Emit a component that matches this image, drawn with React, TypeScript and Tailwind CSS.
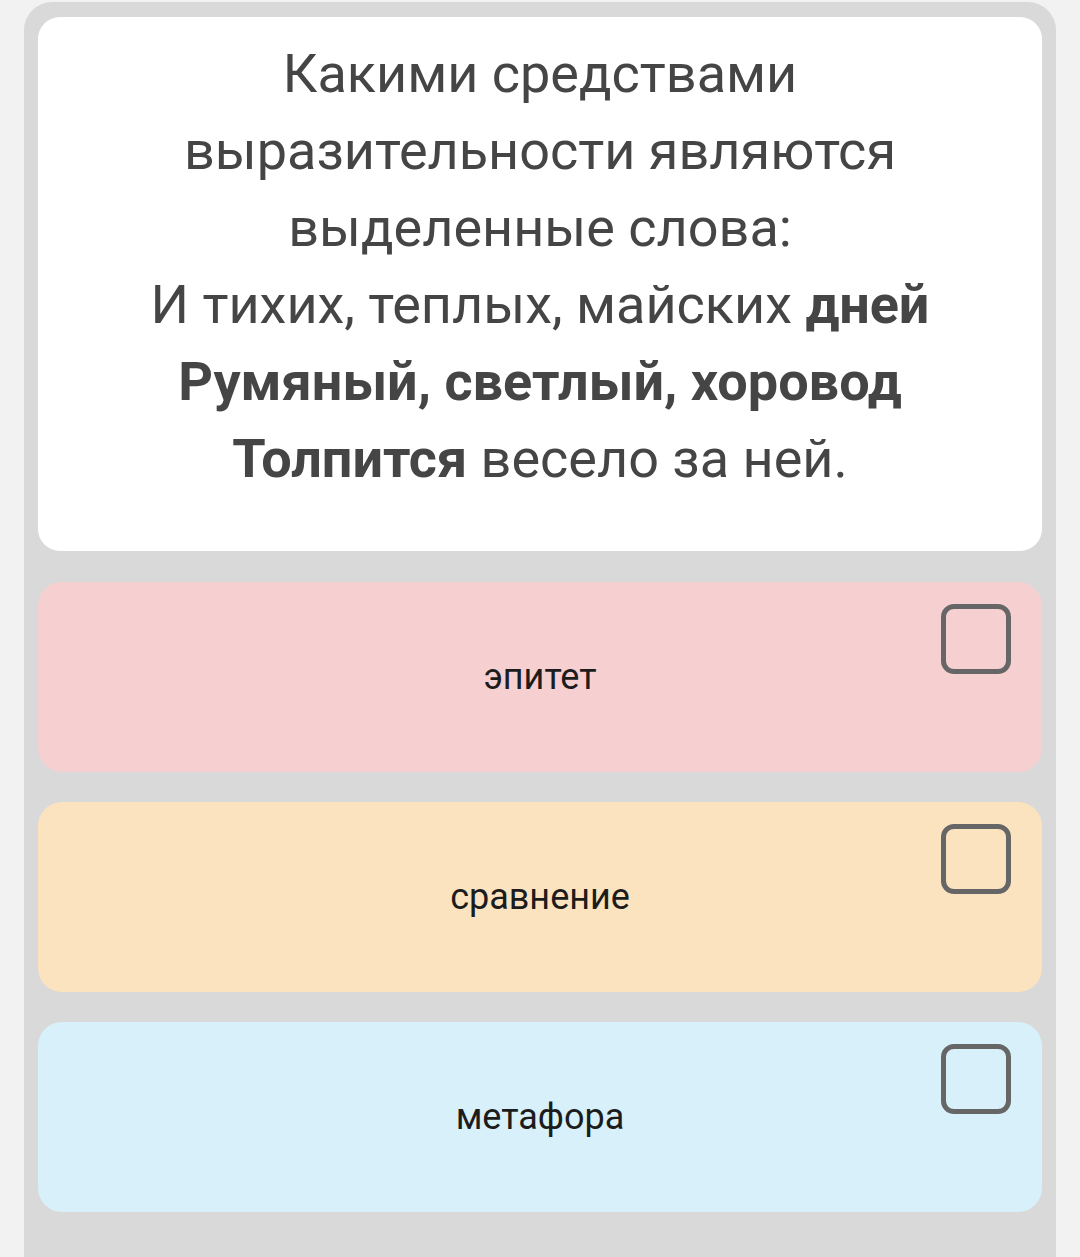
type Option = { label: string; bg: string }

const OPTIONS: Option[] = [
  { label: 'эпитет', bg: 'bg-[#f6cfd0]' },
  { label: 'сравнение', bg: 'bg-[#fce3bf]' },
  { label: 'метафора', bg: 'bg-[#d8f0fa]' },
]

function OptionCard({ option }: { option: Option }) {
  return (
    <div className={`relative flex h-[190px] items-center justify-center rounded-[24px] ${option.bg}`}>
      <span className="text-[36px] leading-none text-[#1c1c1c]">{option.label}</span>
      <div className="absolute top-[22px] right-[31px] h-[70px] w-[70px] rounded-[13px] border-[5px] border-[#666666]" />
    </div>
  )
}

export default function App() {
  return (
    <div
      className="min-h-[1257px] bg-[#f2f2f2] px-[24px] pt-[2px]"
      style={{ fontFamily: 'Roboto, "Noto Sans", sans-serif' }}
    >
      <div className="flex min-h-[1255px] flex-col rounded-t-[28px] bg-[#d9d9d9] px-[14px] pt-[15px]">
        <div className="rounded-[22px] bg-white px-6 pt-[18px] pb-[54px] text-center text-[54px] leading-[77px] text-[#454545]">
          <p>Какими средствами</p>
          <p>выразительности являются</p>
          <p>выделенные слова:</p>
          <p>
            И тихих, теплых, майских <b className="font-bold">дней</b>
          </p>
          <p className="font-bold">Румяный, светлый, хоровод</p>
          <p>
            <b className="font-bold">Толпится</b> весело за ней.
          </p>
        </div>

        <div className="mt-[31px] flex flex-col gap-[30px]">
          {OPTIONS.map((o) => (
            <OptionCard key={o.label} option={o} />
          ))}
        </div>
      </div>
    </div>
  )
}
